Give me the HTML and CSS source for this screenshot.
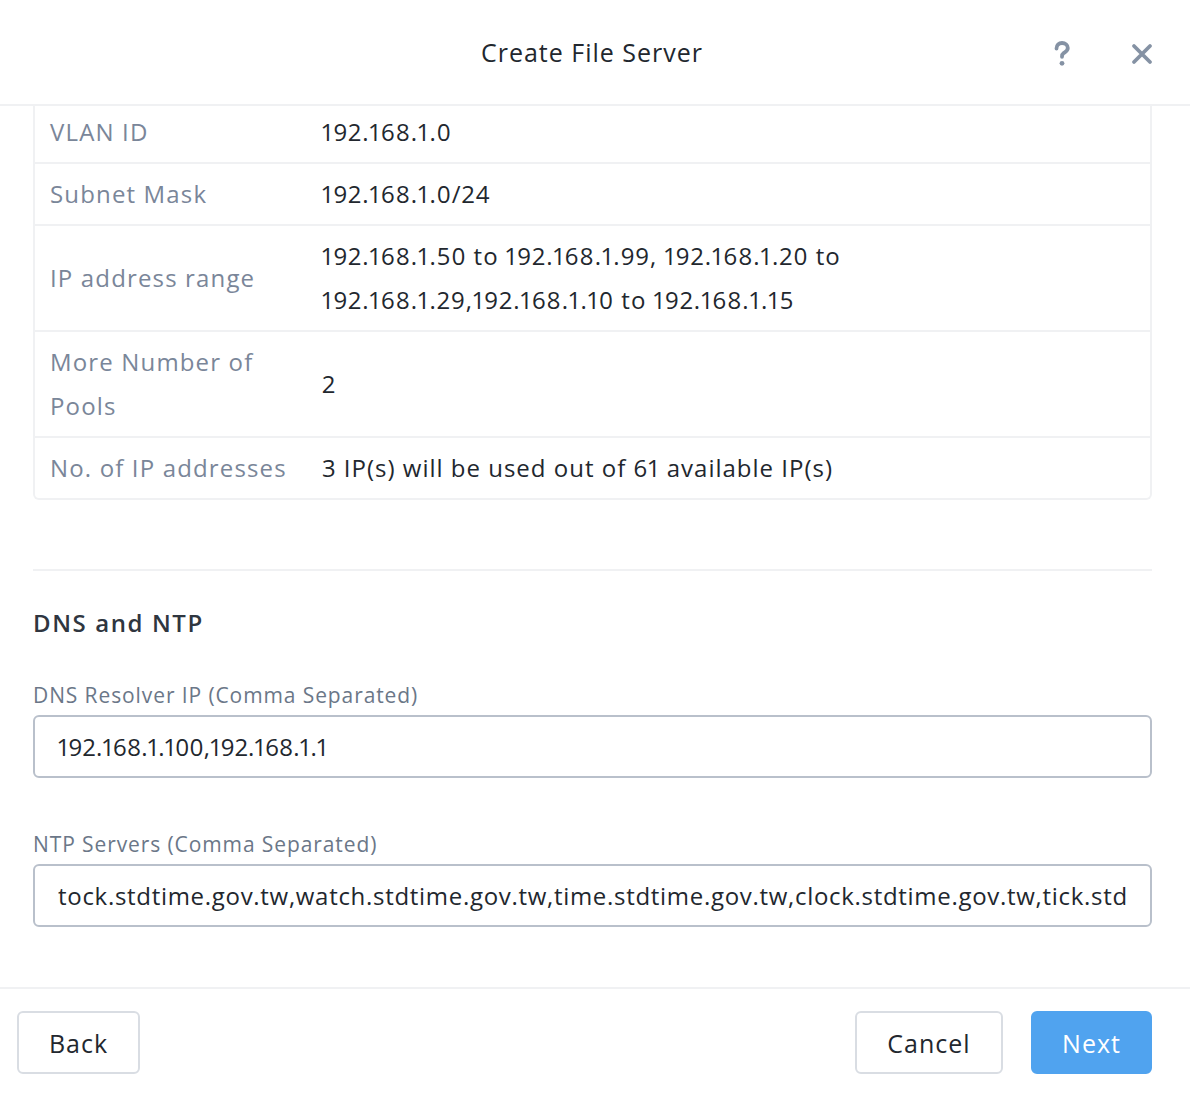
FILE: index.html
```
<!DOCTYPE html>
<html>
<head>
<meta charset="utf-8">
<link rel="stylesheet" href="styles.css">
</head>
<body>
<div class="modal">
  <header class="modal-header">
    <h1 class="title">Create File Server</h1>
    <div class="header-actions">
      <svg class="icon-help" width="18" height="26" viewBox="0 0 18 26"><path d="M3.5 7.5 C3.5 4 6 2 9 2 C12.3 2 14.8 4 14.8 7 C14.8 9.8 12.6 10.8 10.6 12.2 C9.4 13 9 13.8 9 15.8" fill="none" stroke="#8592a4" stroke-width="3.8" stroke-linecap="round"/><circle cx="9" cy="22.3" r="2.4" fill="#8592a4"/></svg>
      <svg class="icon-close" width="22" height="22" viewBox="0 0 22 22"><path d="M3 3 L19 19 M19 3 L3 19" stroke="#8592a4" stroke-width="3.8" stroke-linecap="round"/></svg>
    </div>
  </header>
  <main class="modal-body">
    <div class="table">
      <div class="row first"><div class="label">VLAN ID</div><div class="value">192.168.1.0</div></div>
      <div class="row"><div class="label">Subnet Mask</div><div class="value">192.168.1.0/24</div></div>
      <div class="row"><div class="label">IP address range</div><div class="value">192.168.1.50 to 192.168.1.99, 192.168.1.20 to<br>192.168.1.29,192.168.1.10 to 192.168.1.15</div></div>
      <div class="row"><div class="label">More Number of<br>Pools</div><div class="value">2</div></div>
      <div class="row"><div class="label">No. of IP addresses</div><div class="value">3 IP(s) will be used out of 61 available IP(s)</div></div>
    </div>
    <hr class="divider">
    <h2 class="section-title">DNS and NTP</h2>
    <div class="field">
      <label class="field-label">DNS Resolver IP (Comma Separated)</label>
      <input class="input input-dns" readonly value="192.168.1.100,192.168.1.1">
    </div>
    <div class="field">
      <label class="field-label">NTP Servers (Comma Separated)</label>
      <input class="input input-ntp" readonly value="tock.stdtime.gov.tw,watch.stdtime.gov.tw,time.stdtime.gov.tw,clock.stdtime.gov.tw,tick.stdtime.gov.tw">
    </div>
  </main>
  <footer class="modal-footer">
    <button class="btn back">Back</button>
    <div class="footer-right">
      <button class="btn cancel">Cancel</button>
      <button class="btn primary">Next</button>
    </div>
  </footer>
</div>
</body>
</html>
```
FILE: styles.css
```
* { box-sizing: border-box; }
html, body { margin: 0; padding: 0; background: #fff; }
body {
  font-family: "Open Sans", Lato, sans-serif;
  font-variant-numeric: proportional-nums;
  letter-spacing: 1px;
  color: #22272e;
  width: 1190px;
  height: 1094px;
  overflow: hidden;
}
.modal { display: flex; flex-direction: column; height: 1094px; }
.modal-header {
  height: 106px;
  border-bottom: 2px solid #f0f1f3;
  display: flex;
  align-items: center;
  justify-content: center;
  position: relative;
  flex-shrink: 0;
}
.title {
  margin: 0 0 0 -6px;
  font-size: 25px;
  font-weight: 400;
  color: #22272e;
  letter-spacing: 1px;
}
.header-actions {
  position: absolute;
  right: 37px;
  top: 41px;
  display: flex;
  align-items: center;
  gap: 60px;
}
.modal-body {
  padding: 0 38px 0 33px;
  flex: 1;
  overflow: hidden;
}
.table {
  border: 2px solid #f0f1f3;
  border-top: none;
  border-radius: 0 0 6px 6px;
  width: 1119px;
}
.row {
  display: flex;
  border-top: 2px solid #f0f1f3;
  padding: 8px 0 8px;
  font-size: 24px;
  line-height: 44px;
  align-items: center;
}
.row:first-child { border-top: none; padding-top: 4px; }
.label {
  width: 287px;
  padding: 0 16px 0 15px;
  color: #7a8699;
  flex-shrink: 0;
  white-space: nowrap;
  letter-spacing: 1.15px;
}
.value { color: #22272e; white-space: nowrap; }
.divider {
  border: none;
  border-top: 2px solid #f0f1f3;
  margin: 69px 0 0;
  width: 1119px;
}
.section-title {
  margin: 34px 0 0;
  font-size: 24px;
  font-weight: 600;
  color: #2f3640;
  line-height: 36px;
  letter-spacing: 1.6px;
}
.field { margin-top: 40px; width: 1119px; }
.field + .field { margin-top: 52px; }
.field-label {
  display: block;
  font-size: 21px;
  color: #6b7788;
  line-height: 28px;
  margin-bottom: 6px;
  letter-spacing: 0.9px;
}
.input {
  display: block;
  width: 1119px;
  height: 63px;
  border: 2px solid #b9c0cb;
  border-radius: 6px;
  padding: 0 24px 0 23px;
  font-family: "Open Sans", Lato, sans-serif;
  font-variant-numeric: proportional-nums;
  letter-spacing: 1px;
  font-size: 24px;
  color: #22272e;
  background: #fff;
  outline: none;
}
.input-dns { letter-spacing: 0.2px; }
.input-ntp { letter-spacing: 0.7px; }
.modal-footer {
  border-top: 2px solid #f0f1f3;
  height: 107px;
  display: flex;
  align-items: center;
  justify-content: space-between;
  padding: 2px 38px 0 17px;
  flex-shrink: 0;
}
.footer-right { display: flex; gap: 28px; }
.btn {
  font-family: "Open Sans", Lato, sans-serif;
  letter-spacing: 1px;
  font-size: 25px;
  height: 63px;
  padding: 0;
  background: #fff;
  border: 2px solid #d9dde3;
  border-radius: 6px;
  color: #22272e;
}
.btn.back { width: 123px; }
.btn.cancel { width: 148px; }
.btn.primary {
  width: 121px;
  background: #50a3ef;
  border-color: #50a3ef;
  color: #fff;
}
```
